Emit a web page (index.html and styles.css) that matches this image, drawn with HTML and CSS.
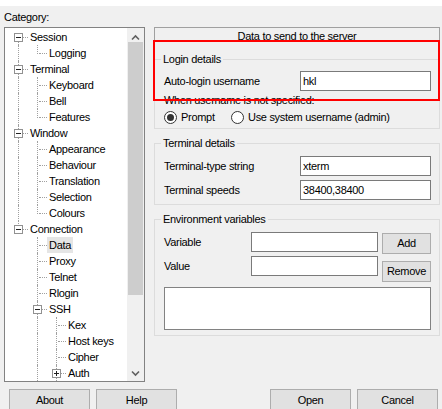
FILE: index.html
```html
<!DOCTYPE html>
<html>
<head>
<meta charset="utf-8">
<link rel="stylesheet" href="styles.css">
</head>
<body>
<div class="topstrip"></div>
<div class="main">
  <div class="cat-label">Category:</div>
  <div class="spacer"></div>
  <div class="tree">
    <div class="tree-items">
      <div class="node"><span class="g box first"><svg width="9" height="9"><rect x="0.5" y="0.5" width="8" height="8" fill="#fff" stroke="#919191"/><line x1="2" y1="4.5" x2="7" y2="4.5" stroke="#222"/></svg></span><span class="lbl">Session</span></div>
      <div class="node"><span class="g pipe"></span><span class="g elbow"></span><span class="lbl">Logging</span></div>
      <div class="node"><span class="g box"><svg width="9" height="9"><rect x="0.5" y="0.5" width="8" height="8" fill="#fff" stroke="#919191"/><line x1="2" y1="4.5" x2="7" y2="4.5" stroke="#222"/></svg></span><span class="lbl">Terminal</span></div>
      <div class="node"><span class="g pipe"></span><span class="g tee"></span><span class="lbl">Keyboard</span></div>
      <div class="node"><span class="g pipe"></span><span class="g tee"></span><span class="lbl">Bell</span></div>
      <div class="node"><span class="g pipe"></span><span class="g elbow"></span><span class="lbl">Features</span></div>
      <div class="node"><span class="g box"><svg width="9" height="9"><rect x="0.5" y="0.5" width="8" height="8" fill="#fff" stroke="#919191"/><line x1="2" y1="4.5" x2="7" y2="4.5" stroke="#222"/></svg></span><span class="lbl">Window</span></div>
      <div class="node"><span class="g pipe"></span><span class="g tee"></span><span class="lbl">Appearance</span></div>
      <div class="node"><span class="g pipe"></span><span class="g tee"></span><span class="lbl">Behaviour</span></div>
      <div class="node"><span class="g pipe"></span><span class="g tee"></span><span class="lbl">Translation</span></div>
      <div class="node"><span class="g pipe"></span><span class="g tee"></span><span class="lbl">Selection</span></div>
      <div class="node"><span class="g pipe"></span><span class="g elbow"></span><span class="lbl">Colours</span></div>
      <div class="node"><span class="g box last"><svg width="9" height="9"><rect x="0.5" y="0.5" width="8" height="8" fill="#fff" stroke="#919191"/><line x1="2" y1="4.5" x2="7" y2="4.5" stroke="#222"/></svg></span><span class="lbl">Connection</span></div>
      <div class="node"><span class="g blank"></span><span class="g tee"></span><span class="lbl sel">Data</span></div>
      <div class="node"><span class="g blank"></span><span class="g tee"></span><span class="lbl">Proxy</span></div>
      <div class="node"><span class="g blank"></span><span class="g tee"></span><span class="lbl">Telnet</span></div>
      <div class="node"><span class="g blank"></span><span class="g tee"></span><span class="lbl">Rlogin</span></div>
      <div class="node"><span class="g blank"></span><span class="g box"><svg width="9" height="9"><rect x="0.5" y="0.5" width="8" height="8" fill="#fff" stroke="#919191"/><line x1="2" y1="4.5" x2="7" y2="4.5" stroke="#222"/></svg></span><span class="lbl">SSH</span></div>
      <div class="node"><span class="g blank"></span><span class="g pipe"></span><span class="g tee"></span><span class="lbl">Kex</span></div>
      <div class="node"><span class="g blank"></span><span class="g pipe"></span><span class="g tee"></span><span class="lbl">Host keys</span></div>
      <div class="node"><span class="g blank"></span><span class="g pipe"></span><span class="g tee"></span><span class="lbl">Cipher</span></div>
      <div class="node"><span class="g blank"></span><span class="g pipe"></span><span class="g box"><svg width="9" height="9"><rect x="0.5" y="0.5" width="8" height="8" fill="#fff" stroke="#919191"/><line x1="2" y1="4.5" x2="7" y2="4.5" stroke="#222"/><line x1="4.5" y1="2" x2="4.5" y2="7" stroke="#222"/></svg></span><span class="lbl">Auth</span></div>
    </div>
    <div class="scrollbar">
      <div class="sb-btn"><svg width="17" height="14"><polyline points="5,11.5 8.5,8 12,11.5" fill="none" stroke="#606060" stroke-width="1.6"/></svg></div>
      <div class="sb-track"><div class="sb-thumb"></div></div>
      <div class="sb-btn"><svg width="17" height="14"><polyline points="5,4.5 8.5,8 12,4.5" fill="none" stroke="#606060" stroke-width="1.6"/></svg></div>
    </div>
  </div>
  <div class="panel">
    <div class="title-box">Data to send to the server</div>
    <fieldset class="group login">
      <legend>Login details</legend>
      <div class="field-row first-row">
        <span class="flabel">Auto-login username</span>
        <input class="tinput wide" type="text" value="hkl">
      </div>
      <div class="text-row">When username is not specified:</div>
      <div class="radio-row">
        <span class="radio-opt prompt"><span class="radio on"></span>Prompt</span>
        <span class="radio-opt"><span class="radio"></span>Use system username (admin)</span>
      </div>
    </fieldset>
    <fieldset class="group term">
      <legend>Terminal details</legend>
      <div class="field-row first-row">
        <span class="flabel">Terminal-type string</span>
        <input class="tinput wide" type="text" value="xterm">
      </div>
      <div class="field-row second-row">
        <span class="flabel">Terminal speeds</span>
        <input class="tinput wide" type="text" value="38400,38400">
      </div>
    </fieldset>
    <fieldset class="group env">
      <legend>Environment variables</legend>
      <div class="env-grid">
        <div class="env-fields">
          <div class="field-row">
            <span class="flabel">Variable</span>
            <input class="tinput narrow" type="text" value="">
          </div>
          <div class="field-row">
            <span class="flabel">Value</span>
            <input class="tinput narrow" type="text" value="">
          </div>
        </div>
        <div class="env-buttons">
          <button class="btn small">Add</button>
          <button class="btn small">Remove</button>
        </div>
      </div>
      <div class="listbox"></div>
    </fieldset>
    <div class="annot"></div>
  </div>
</div>
<div class="buttons">
  <div class="btn-group">
    <button class="btn big">About</button>
    <button class="btn big">Help</button>
  </div>
  <div class="btn-group">
    <button class="btn big">Open</button>
    <button class="btn big">Cancel</button>
  </div>
</div>
</body>
</html>
```
FILE: styles.css
```css
* { box-sizing: border-box; }
html, body { margin: 0; padding: 0; }
body {
  width: 442px;
  height: 409px;
  overflow: hidden;
  background: #f0f0f0;
  color: #000;
  font: 11px/13px "Liberation Sans", Arial, sans-serif;
  letter-spacing: -0.3px;
}
.topstrip { height: 6px; background: #fff; }
.main {
  display: grid;
  grid-template-columns: 141px 286px;
  grid-template-rows: 21px 355px;
  column-gap: 9px;
  padding-left: 4px;
}
.cat-label { padding-top: 5px; line-height: 13px; }

/* tree */
.tree {
  border: 1px solid #828282;
  background: #fff;
  display: flex;
  overflow: hidden;
}
.tree-items { flex: 1; padding: 1px 0 0 4px; overflow: hidden; }
.node { display: flex; height: 16px; }
.g { position: relative; flex: none; width: 19px; height: 16px; display: flex; justify-content: center; }
.g::before {
  content: "";
  position: absolute;
  left: 9px; top: 0; bottom: 0;
  border-left: 1px dotted #a0a0a0;
}
.g.blank::before { display: none; }
.g.elbow::before { bottom: 7px; }
.g.first::before { top: 8px; }
.g.last::before { bottom: 7px; }
.g.tee::after, .g.elbow::after, .g.box::after {
  content: "";
  position: absolute;
  left: 11px; right: 0; top: 8px;
  border-top: 1px dotted #a0a0a0;
}
.g.box::after { left: 14px; }
.g.box svg { position: relative; z-index: 1; margin-top: 4px; display: block; }
.lbl { padding: 0 2px; line-height: 16px; height: 16px; white-space: nowrap; }
.lbl.sel { background: #e5e5e5; }

.scrollbar { width: 17px; flex: none; background: #f0f0f0; display: flex; flex-direction: column; }
.sb-btn { height: 14px; flex: none; }
.sb-btn svg { display: block; }
.sb-track { flex: 1; }
.sb-thumb { height: 253px; margin: 0 1px; background: #cdcdcd; }

/* right panel */
.panel { position: relative; }
.title-box {
  height: 15px;
  border: 1px solid #a0a0a0;
  text-align: center;
  line-height: 17px;
  white-space: nowrap;
}
.group {
  margin: 0;
  padding: 0 8px 0 9px;
  border: 1px solid #dcdcdc;
  min-width: 0;
}
.group legend {
  padding: 0 2px;
  margin-left: -3px;
  line-height: 13px;
  height: 13px;
}
.login { margin-top: 11px; padding-bottom: 4px; }
.term { margin-top: 8px; padding-bottom: 4px; }
.env { margin-top: 8px; padding-bottom: 5px; }

.field-row { display: flex; align-items: center; height: 20px; }
.flabel { flex: 1; white-space: nowrap; }
.first-row { margin-top: 5px; }
.term .first-row { margin-top: 6px; }
.second-row { margin-top: 4px; }
.tinput {
  height: 20px;
  border: 1px solid #7a7a7a;
  background: #fff;
  padding: 0 2px;
  font: inherit;
  letter-spacing: inherit;
  color: #000;
  outline: none;
  margin: 0;
}
.tinput.wide { width: 131px; }
.tinput.narrow { width: 127px; }
.text-row { margin-top: 3px; height: 13px; white-space: nowrap; }
.radio-row { margin-top: 3px; height: 14px; display: flex; align-items: center; white-space: nowrap; }
.radio-opt { display: inline-flex; align-items: center; gap: 4px; }
.radio-opt.prompt { width: 67px; }
.radio {
  width: 13px; height: 13px;
  border: 1px solid #333;
  border-radius: 50%;
  background: #fff;
  display: inline-flex;
  align-items: center;
  justify-content: center;
}
.radio.on::after {
  content: "";
  width: 7px; height: 7px;
  border-radius: 50%;
  background: #333;
}

.env-grid {
  display: grid;
  grid-template-columns: 1fr 49px;
  column-gap: 4px;
  margin-top: 6px;
}
.env-fields { display: flex; flex-direction: column; gap: 4px; }
.env-buttons { display: flex; flex-direction: column; gap: 7px; padding-top: 1px; }
.listbox { margin-top: 5px; height: 43px; border: 1px solid #828282; background: #fff; }

.btn {
  font: inherit;
  letter-spacing: inherit;
  color: #000;
  background: #e1e1e1;
  border: 1px solid #adadad;
  padding: 0;
  margin: 0;
}
.btn.small { width: 49px; height: 21px; }
.btn.big { width: 81px; height: 23px; }

.buttons {
  display: flex;
  justify-content: space-between;
  margin-top: 7px;
  padding: 0 4px 0 9px;
}
.btn-group { display: flex; gap: 6px; }

/* annotation overlay */
.annot {
  position: absolute;
  left: -1px;
  top: 13px;
  width: 287px;
  height: 61px;
  border: 2px solid #ff0000;
  pointer-events: none;
}
```
